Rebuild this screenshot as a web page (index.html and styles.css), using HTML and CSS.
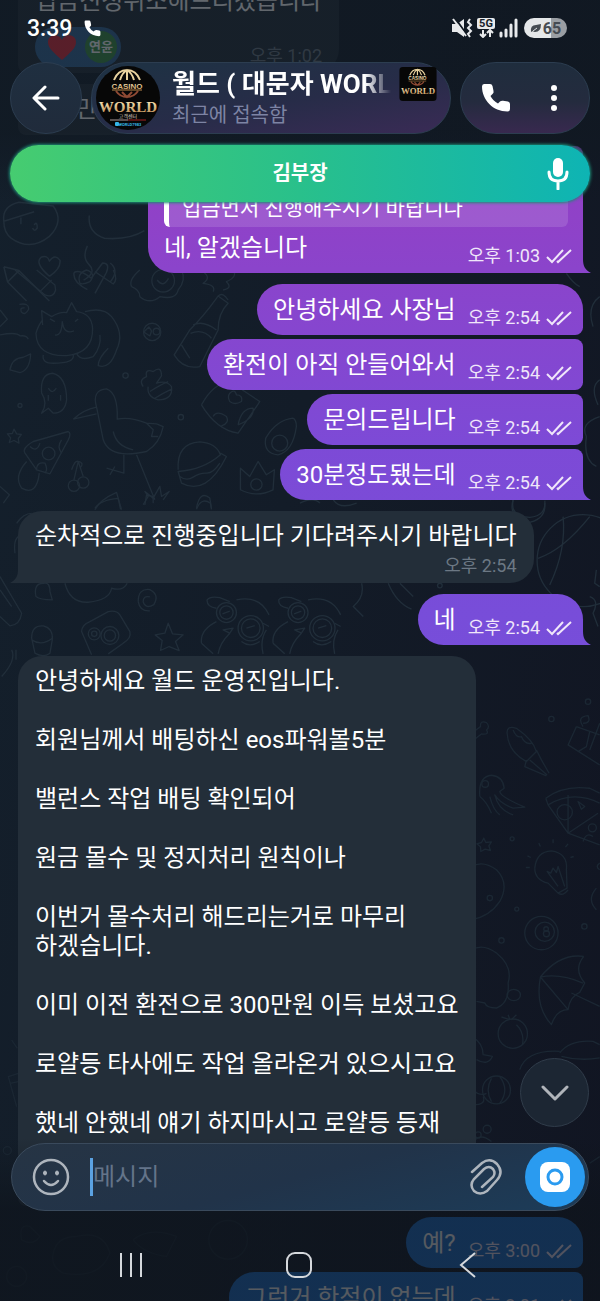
FILE: index.html
```html
<!doctype html>
<html lang="ko">
<head>
  <meta charset="UTF-8">
  <title>월드 - 채팅</title>
  <meta name="viewport" content="width=device-width, initial-scale=1.0">
  <link rel="stylesheet" href="styles.css">
</head>
<body>
  <!-- shared icons -->
  <svg class="sprite" aria-hidden="true">
    <symbol id="ticks" viewBox="0 0 27 16">
      <path d="M1 9 L6 14 L17 2 M11 13 L12 14 L25 2" />
    </symbol>
    <symbol id="phone" viewBox="0 0 30 30">
      <path d="M3 1 H9 Q11 1 11.5 3 L12.5 8 Q13 10 11.5 11 L9.5 13 Q12 18 17 20.5 L19 18.5 Q20 17.5 22 17.7 L27 18.5 Q29 19 29 21 V26 Q29 28.5 26.5 28.5 C12 28.5 1 17 1 3.5 Q1 1 3 1 Z" />
    </symbol>
    <symbol id="logo" viewBox="0 0 64 64">
      <defs>
        <linearGradient id="gold" x1="0" y1="0" x2="0" y2="1">
          <stop offset="0" stop-color="#fff3c4" />
          <stop offset="1" stop-color="#b9854a" />
        </linearGradient>
      </defs>
      <rect width="64" height="64" fill="#070707" />
      <g fill="none" stroke="#e9d3a0" stroke-width="2">
        <path d="M18 14 Q22 4 31 4 Q40 4 44 14 M24 14 Q26 7 31 4 Q36 7 38 14 M31 4 V14" />
        <path d="M20 25 Q24 31 31 31 Q38 31 42 25 M26 26 L31 31 L36 26" stroke="#8f4a34" />
      </g>
      <text x="31" y="23" text-anchor="middle" class="logo-casino">CASINO</text>
      <path d="M16 24 H46" stroke="#b9854a" stroke-width="1" />
      <text x="32" y="46" text-anchor="middle" class="logo-world">WORLD</text>
    </symbol>
  </svg>

  <!-- wallpaper doodles -->
  <svg class="wallpaper" viewBox="0 0 600 1301" preserveAspectRatio="xMinYMin slice" aria-hidden="true">
    <g transform="translate(0 130) scale(.38)">
      <path d="M10 240 Q5 200 50 190 L140 200 Q170 240 130 280 Q80 320 30 285 Q10 270 10 240 L90 215 M55 230 v18 M90 250 q8 -12 8 8 q-8 12 -12 0" />
      <path d="M235 225 Q230 270 275 285 Q340 290 380 265 M130 385 Q90 350 108 335 Q125 328 130 345 Q145 325 158 343 Q160 365 130 385" />
      <path d="M10 360 L50 370 L130 450 M10 360 L20 400 L70 450 M20 400 L50 370" />
      <path d="M230 305 q-15 30 5 50 t-15 40 M195 375 Q210 365 240 390 L270 350 Q290 350 280 375 L250 430 M195 375 Q190 400 230 420 M290 350 q25 20 0 50" />
    </g>
    <g transform="translate(0 270) scale(.333)">
      <path d="M45 0 L135 75 Q160 85 167 60 L165 45 L110 0 M120 65 L155 30" />
      <path d="M240 40 Q230 10 260 0 Q290 10 270 35 Q250 45 240 40 M285 5 L340 42 Q355 30 340 0" />
      <path d="M395 50 Q385 30 420 0 M395 50 Q420 60 420 80 Q450 105 480 80 Q530 90 535 60 Q560 30 545 0" /><circle cx="490" cy="32" r="34" /><path d="M472 30 q18 25 34 -5" />
      <path d="M600 0 Q640 20 610 40 Q650 45 640 65 M700 0 Q715 20 680 35 Q700 55 670 60" />
      <path d="M128 165 L125 122 L155 140 Q180 125 200 128 L215 98 L230 125 Q275 130 278 175 Q280 250 200 257 Q110 260 108 190 Q115 165 128 150 M165 195 q20 5 22 -40 q5 40 35 28 M165 155 l-15 -8 M225 155 l10 -8" />
      <path d="M255 125 Q310 110 335 140 Q375 190 350 240 Q330 300 295 287 Q295 265 325 235 M130 255 Q125 280 160 280 Q225 280 220 255 M300 195 Q305 230 280 260 Q240 275 230 250" />
      <path d="M0 120 L22 148 L0 170 M0 195 Q50 185 60 198 Q80 195 85 208 M58 103 q30 -5 28 15 q-10 20 -22 8 q-5 -15 10 -12" />
      <path d="M30 300 Q35 265 70 262 L92 252 Q90 300 60 308 Z" />
      <path d="M125 430 Q145 400 125 370 Q120 312 158 310 Q200 320 200 390 Q195 430 160 430 L145 415 Z M145 355 q12 20 24 0 M145 375 v18 M182 375 v18" />
      <circle cx="457" cy="186" r="26" /><circle cx="470" cy="185" r="10" /><path d="M432 186 l15 -15 8 12 -5 15 z" />
      <path d="M655 78 L685 100 Q655 130 655 180 L600 290 Q550 300 523 255 L570 180 Q610 140 650 85 Z M655 78 Q670 65 685 90 M580 165 Q610 150 650 180 M572 190 Q610 175 635 205 M545 225 Q560 250 570 265" />
      <path d="M430 350 Q415 330 440 320 Q435 295 460 305 Q485 285 485 318 L470 340 Q500 330 515 350 Q520 390 475 390 Q440 380 445 350 M450 365 Q480 345 505 335 M465 385 Q490 370 515 358" />
      <path d="M220 448 Q250 420 290 412 Q275 360 320 357 Q355 370 352 448 Q390 440 440 460 L470 462 L490 470 Q480 520 440 545 Q330 570 310 510 L290 412 M220 448 L290 432 M340 485 Q350 530 400 540 M440 460 L460 480 455 500 475 500 M372 555 L372 610 L320 595 M345 590 L330 615 M410 555 L465 690 M430 705 L445 680 435 665 460 685 480 650 485 680 508 665 490 690" />
      <path d="M75 550 Q65 535 100 515 L205 485 Q215 490 205 510 L150 612 L110 600 Z M80 575 Q40 620 65 655 Q110 680 118 610" /><circle cx="146" cy="551" r="19" /><path d="M185 510 q-15 20 0 40 M110 600 q0 -25 25 -20 q10 20 0 30 M90 530 q20 20 30 -10" />
      <path d="M42 478 L50 492 L64 494 L55 506 L57 520 L42 512 L28 518 L32 504 L22 492 L37 491 Z" />
      <circle cx="222" cy="648" r="17" /><circle cx="250" cy="638" r="17" /><path d="M222 630 L235 575 M250 620 L235 575 M215 600 q10 -30 20 -25 q20 5 5 20" />
      <path d="M535 600 Q530 520 600 516 Q650 520 662 555 Q610 600 535 605 L545 640 Q620 680 680 560 L662 550 M540 620 Q560 635 580 622 T620 610 T660 580" />
      <path d="M605 405 Q640 340 690 335 L780 395 L770 410 L715 490 Q650 480 605 405 M690 370 q15 -15 20 5 q20 0 15 20 q-20 12 -35 0 q-8 -15 0 -25 M640 440 q10 -20 40 0 q10 20 -15 28 M715 465 q10 -50 45 -50 q5 30 -45 50" />
      <path d="M880 445 Q830 450 798 505 Q790 550 835 555 Q880 545 890 470 Q890 450 880 445" /><circle cx="840" cy="520" r="24" />
      <path d="M722 595 L750 620 L775 575 L800 615 L824 600 L820 660 Q770 685 722 660 Z" /><circle cx="770" cy="644" r="17" />
      <path d="M285 720 Q300 690 350 668 L365 720 M590 715 Q600 660 630 685 L635 715 M0 650 L28 675 L10 700" />
      <circle cx="377" cy="317" r="8" /><circle cx="543" cy="442" r="8" /><circle cx="60" cy="407" r="6" />
    </g>
    <g transform="translate(300 270) scale(.333)">
      <path d="M900 80 Q860 110 880 170 M900 330 Q870 350 895 405 M860 500 Q840 460 900 440 M860 500 Q850 570 890 590" /><path d="M640 690 Q625 740 680 760 Q740 750 735 700 M800 10 q20 30 40 40 M0 700 q40 -20 60 0 M100 690 q20 30 70 10" />
    </g>
    <g transform="translate(0 500) scale(.333)">
      <path d="M285 25 Q300 0 355 -5 L362 28 M590 28 Q605 -10 632 10 L635 28 M435 15 l5 -30 20 5 0 20 M50 70 Q70 40 95 40 M45 160 Q40 120 55 110" />
      <path d="M0 230 L65 340 Q60 375 30 378 L0 350 M0 270 L35 320" />
      <path d="M108 290 Q100 250 130 250 Q150 245 150 275 L157 300 Q120 300 108 290 M195 250 Q210 310 265 307 Q330 300 335 265 Q370 275 382 250" />
      <path d="M415 305 q0 -40 35 -36 q30 15 12 45 q-25 15 -32 -8 q0 -20 20 -15 M415 305 q5 30 35 28" />
      <path d="M275 465 L245 395 Q245 375 270 365 L325 335 Q350 330 360 345 L390 395 Q395 415 370 430 L325 462" /><circle cx="330" cy="407" r="27" /><circle cx="330" cy="407" r="17" /><circle cx="283" cy="402" r="18" /><circle cx="283" cy="402" r="8" />
      <path d="M505 370 L518 402 L550 405 L527 425 L538 452 L508 440 L482 452 L487 422 L466 405 L495 400 Z" />
      <path d="M95 415 Q95 375 130 378 Q160 385 157 420 L150 460 Q130 475 105 460 Z M95 420 Q125 440 157 415 M35 450 q15 30 -30 80 M48 450 v30" />
      <g id="owls">
        <path d="M655 462 Q660 430 690 400 M605 430 Q600 390 650 365 M650 325 Q620 320 622 300 Q630 288 660 293 L690 305 M710 300 Q780 285 808 345 M605 430 L640 462 M670 390 L700 385 L690 400 Z M790 462 Q780 420 800 390" /><circle cx="680" cy="338" r="30" /><circle cx="680" cy="338" r="20" /><circle cx="753" cy="385" r="38" /><circle cx="753" cy="385" r="28" /><path d="M790 370 L808 380 M668 342 l22 -8 M740 385 l25 -8 M725 425 q25 20 55 0" />
      </g>
      <use href="#owls" x="215" />
    </g>
    <g transform="translate(300 500) scale(.333)">
      <circle cx="850" cy="182" r="138" /><path d="M790 50 Q800 150 750 255 M715 175 Q790 150 870 50" />
      <path d="M185 250 Q195 290 160 320 L190 350 M265 250 Q290 310 335 328 M300 250 L340 290 M890 210 L885 250 900 260 M870 290 Q900 300 880 340 L895 380" /><circle cx="420" cy="257" r="7" /><path d="M570 0 q30 -30 60 0 M640 0 q-10 50 50 52 q50 -5 45 -50" />
    </g>
    <g class="faint" transform="translate(300 680) scale(.333)">
      <circle cx="865" cy="65" r="8" /><circle cx="755" cy="117" r="8" /><circle cx="637" cy="477" r="6" /><circle cx="651" cy="688" r="6" /><circle cx="605" cy="782" r="8" /><circle cx="854" cy="740" r="8" /><circle cx="570" cy="655" r="8" />
      <path d="M515 160 L542 140 Q540 120 560 128 Q572 140 560 150 Q570 165 545 162 L515 185" />
      <path d="M622 160 Q620 135 650 145 Q700 180 710 215 L680 245 Q625 215 622 160 M680 240 L675 260 L740 288 M710 210 L725 240 L748 280 M690 240 L742 285 M640 150 q10 25 25 20 q10 25 30 20" />
      <path d="M540 350 Q535 290 575 286 Q610 290 613 325 L600 335 Q600 350 675 382 L640 385 Q600 370 585 345 Q595 390 640 405 M570 350 Q580 390 600 405 M540 350 Q560 365 575 400" /><circle cx="556" cy="312" r="10" />
      <path d="M830 140 L805 195 L900 255 M830 140 L900 165 M850 140 Q830 110 865 107 Q875 130 850 130 M870 155 L860 200 L835 215 M900 130 L870 210" />
      <path d="M738 355 Q790 315 870 325 L900 340 M738 355 L745 375 Q820 330 900 370 M745 375 L805 460 L900 495 M805 345 V460 L895 400 M835 365 l20 15 -10 8 z M850 485 q10 -30 30 -15" /><circle cx="795" cy="397" r="23" /><circle cx="878" cy="444" r="12" />
      <path d="M552 475 L558 488 L575 486 L567 498 L572 512 L556 508 L543 515 L542 501 L531 492 L545 488 Z" />
      <path d="M705 565 Q710 515 755 513 Q805 520 800 570 L802 625 L775 640 L745 610 Q705 600 705 565 M775 620 L742 575 L753 580 L760 565 L770 578 L775 560 L795 620 M775 640 Q790 650 805 630 M693 533 l-10 -5 M690 563 h-12 M722 500 l-5 -10 M760 490 v-12 M797 502 l8 -10 M812 533 l10 -3" />
      <path d="M515 560 Q550 540 590 570 Q630 610 600 665 Q570 710 515 720 M890 690 Q860 660 890 625 M900 550 q-15 10 0 20" /><circle cx="725" cy="760" r="50" /><circle cx="735" cy="756" r="29" /><circle cx="739" cy="748" r="7" /><circle cx="740" cy="762" r="9" />
      <path d="M515 810 Q550 790 590 820 Q640 860 625 910 Q630 970 590 985 Q560 985 555 970 L530 965" /><ellipse cx="642" cy="946" rx="20" ry="17" />
      <path d="M852 830 Q780 820 722 892 Q705 980 755 1035 Q770 990 805 990 Q810 950 840 938 L855 910 Q820 870 852 830 M722 892 Q780 880 850 910 M722 892 L805 990 M815 940 L900 980" />
      <circle cx="639" cy="1062" r="44" /><path d="M630 1020 l-25 -8 M630 1020 l-5 -15 M635 1020 l15 -15 M650 1035 Q675 1060 668 1095 M515 1070 Q550 1090 550 1125 L578 1130 Q565 1160 530 1140 M660 1170 Q680 1110 780 1115 M780 1120 Q810 1080 880 1085 L900 1095 M785 1130 Q840 1145 900 1135" />
    </g>
    <g class="faint" transform="translate(300 1040) scale(.333)">
      <circle cx="590" cy="150" r="42" /><path d="M575 115 Q555 150 575 185 M600 110 Q630 150 600 190 M520 150 Q540 170 560 160 M520 195 Q560 195 550 170 M525 300 q20 -20 50 5 M900 350 L870 370" /><circle cx="562" cy="268" r="12" /><circle cx="535" cy="285" r="9" />
    </g>
    <g class="faint" transform="translate(0 1040) scale(.333)">
      <path d="M55 100 L25 110 L50 200 M30 130 L55 125 M35 0 L52 25" /><circle cx="22" cy="332" r="12" /><path d="M65 600 Q55 550 90 560 L120 590 Q100 620 65 600 M160 640 Q170 590 230 590 Q310 570 330 640 Q300 720 190 700 Q150 680 160 640 M400 600 Q450 560 530 590 L500 650 Q430 640 400 600" /><circle cx="50" cy="710" r="30" /><circle cx="685" cy="600" r="58" />
    </g>
  </svg>

  <main class="chat">
    <article class="msg incoming">
      <p>입금신청취소해드리겠습니다</p>
      <div class="reactions">
        <span class="reaction">
          <svg width="30" height="27" viewBox="0 0 30 27" aria-label="하트"><path d="M15 26 C6 18 1 14 1 8 C1 0 12 -1 15 6 C18 -1 29 0 29 8 C29 14 24 18 15 26 Z" fill="#e32b3a" /></svg>
          <span class="reaction-user">연윤</span>
        </span>
        <time>오후 1:02</time>
      </div>
    </article>

    <article class="msg incoming group">
      <p>100만원</p>
    </article>

    <article class="msg outgoing reply group tail">
      <blockquote>월드<br>입금먼저 진행해주시기 바랍니다</blockquote>
      <div class="line">
        <p>네, 알겠습니다</p>
        <span class="meta"><time>오후 1:03</time><svg class="ticks" role="img" aria-label="읽음"><use href="#ticks" /></svg></span>
      </div>
    </article>

    <article class="msg outgoing line group first">
      <p>안녕하세요 사장님</p>
      <span class="meta"><time>오후 2:54</time><svg class="ticks" role="img" aria-label="읽음"><use href="#ticks" /></svg></span>
    </article>
    <article class="msg outgoing line">
      <p>환전이 아직 안들어와서</p>
      <span class="meta"><time>오후 2:54</time><svg class="ticks" role="img" aria-label="읽음"><use href="#ticks" /></svg></span>
    </article>
    <article class="msg outgoing line">
      <p>문의드립니다</p>
      <span class="meta"><time>오후 2:54</time><svg class="ticks" role="img" aria-label="읽음"><use href="#ticks" /></svg></span>
    </article>
    <article class="msg outgoing line tail">
      <p>30분정도됐는데</p>
      <span class="meta"><time>오후 2:54</time><svg class="ticks" role="img" aria-label="읽음"><use href="#ticks" /></svg></span>
    </article>

    <article class="msg incoming group tail">
      <p>순차적으로 진행중입니다 기다려주시기 바랍니다</p>
      <time>오후 2:54</time>
    </article>

    <article class="msg outgoing line group first tail">
      <p>네</p>
      <span class="meta"><time>오후 2:54</time><svg class="ticks" role="img" aria-label="읽음"><use href="#ticks" /></svg></span>
    </article>

    <article class="msg incoming notice group">
      <p>안녕하세요 월드 운영진입니다.</p>
      <p>회원님께서 배팅하신 eos파워볼5분</p>
      <p>밸런스 작업 배팅 확인되어</p>
      <p>원금 몰수 및 정지처리 원칙이나</p>
      <p>이번거 몰수처리 해드리는거로 마무리<br>하겠습니다.</p>
      <p>이미 이전 환전으로 300만원 이득 보셨고요</p>
      <p>로얄등 타사에도 작업 올라온거 있으시고요</p>
      <p>했네 안했네 얘기 하지마시고 로얄등 등재</p>
    </article>

    <article class="msg outgoing line group first">
      <p>예?</p>
      <span class="meta"><time>오후 3:00</time><svg class="ticks" role="img" aria-label="읽음"><use href="#ticks" /></svg></span>
    </article>
    <article class="msg outgoing line">
      <p>그런거 한적이 없는데</p>
      <span class="meta"><time>오후 3:01</time><svg class="ticks" role="img" aria-label="읽음"><use href="#ticks" /></svg></span>
    </article>
  </main>

  <header class="top">
    <div class="status">
      <span class="clock">3:39</span>
      <svg class="status-call" width="17" height="17"><use href="#phone" /></svg>
      <div class="status-icons">
        <svg width="21" height="20" viewBox="0 0 21 20">
          <path d="M0 6 H5 L12 1 V19 L5 14 H0 Z" fill="#e8eaec" />
          <path d="M3 0 L15 17" stroke="#111922" stroke-width="2" />
          <path d="M1 1 L14 18" stroke="#e8eaec" stroke-width="2" />
          <path d="M18 1 L16 4 L19 7 L16 10 L19 13 L16 16 L18 19" fill="none" stroke="#e8eaec" stroke-width="2" />
        </svg>
        <svg width="18" height="20" viewBox="0 0 18 20">
          <rect width="18" height="11" rx="2" fill="#e8eaec" />
          <text x="9" y="9" text-anchor="middle" class="net">5G</text>
          <path d="M6 12 V18 M3 16 L6 19 L9 16 M13 19 V13 M10 15 L13 12 L16 15" fill="none" stroke="#e8eaec" stroke-width="2" />
        </svg>
        <svg width="19" height="20" viewBox="0 0 19 20">
          <path d="M2 15 V18 M7 12 V18 M12 7 V18 M17 2 V18" stroke="#e8eaec" stroke-width="3" stroke-linecap="round" />
        </svg>
        <span class="battery">
          <svg width="11" height="9" viewBox="0 0 11 9"><path d="M1 8 Q0 1 6 1 L11 0 Q11 8 5 8 Q3 8 3 7 Z" fill="#444b52" /><path d="M3 7 L7 4" stroke="#dfe2e4" /></svg>
          65
        </span>
      </div>
    </div>

    <div class="bar">
      <button class="glass back" type="button" aria-label="뒤로">
        <svg width="28" height="26" viewBox="0 0 28 26"><path d="M26 13 H3 M13 2 L2 13 L13 24" fill="none" stroke="#fff" stroke-width="3" stroke-linecap="round" stroke-linejoin="round" /></svg>
      </button>
      <a class="glass peer" href="#profile">
        <svg class="avatar" viewBox="0 0 64 64" aria-label="월드">
          <use href="#logo" />
          <text x="32" y="52" text-anchor="middle" class="logo-sub">고객센터</text>
          <path d="M14 54 H32" stroke="#a99" stroke-width="1" /><path d="M32 54 H50" stroke="#a32222" stroke-width="1" />
          <rect x="19" y="56" width="4" height="4" rx="1" fill="#35b5e8" />
          <text x="34" y="60" text-anchor="middle" class="logo-id">WORLD7983</text>
        </svg>
        <span class="peer-text">
          <span class="peer-row">
            <strong>월드 ( 대문자 WORLD</strong>
            <svg class="badge" viewBox="0 0 64 58" aria-hidden="true"><use href="#logo" width="64" height="64" /></svg>
          </span>
          <small>최근에 접속함</small>
        </span>
      </a>
      <div class="glass actions">
        <button type="button" aria-label="전화"><svg width="30" height="30"><use href="#phone" /></svg></button>
        <button type="button" aria-label="메뉴"><svg width="8" height="26" viewBox="0 0 8 26"><circle cx="4" cy="3" r="3" /><circle cx="4" cy="13" r="3" /><circle cx="4" cy="23" r="3" /></svg></button>
      </div>
    </div>

    <button class="call" type="button">
      <span>김부장</span>
      <svg width="22" height="32" viewBox="0 0 22 32" aria-hidden="true"><rect x="6" y="0" width="10" height="19" rx="5" fill="#fff" /><path d="M2 14 Q2 23 11 23 Q20 23 20 14 M11 23 V31" fill="none" stroke="#fff" stroke-width="3" stroke-linecap="round" /></svg>
    </button>
  </header>

  <footer class="bottom">
    <button class="glass scroll-down" type="button" aria-label="맨 아래로">
      <svg width="28" height="16" viewBox="0 0 28 16"><path d="M2 2 L14 14 L26 2" fill="none" stroke="#b0b4ba" stroke-width="3" stroke-linecap="round" stroke-linejoin="round" /></svg>
    </button>
    <form class="composer">
      <button type="button" aria-label="이모티콘">
        <svg width="38" height="38" viewBox="0 0 38 38" fill="none" stroke="#aeb5bd"><circle cx="19" cy="19" r="17" stroke-width="2.5" /><path d="M12 23 Q19 31 26 23" stroke-width="2.5" stroke-linecap="round" /><ellipse cx="13" cy="15" rx="1.5" ry="2" fill="#aeb5bd" /><ellipse cx="25" cy="15" rx="1.5" ry="2" fill="#aeb5bd" /></svg>
      </button>
      <input type="text" placeholder="메시지" aria-label="메시지">
      <button type="button" aria-label="파일 첨부">
        <svg width="32" height="38" viewBox="0 0 32 38" fill="none" stroke="#aeb5bd" stroke-width="2.5" stroke-linecap="round"><path d="M2 14 L12 5 Q20 -1 27 6 Q34 14 27 22 L17 33 Q10 38 4 33 Q-1 27 4 21 L14 11 Q19 7 23 11 Q26 15 23 19 L12 29" /></svg>
      </button>
      <button class="camera" type="button" aria-label="카메라">
        <svg width="30" height="30" viewBox="0 0 30 30"><rect width="30" height="30" rx="8" fill="#fff" /><circle cx="15" cy="15" r="7" fill="#fff" stroke="#2a9bf0" stroke-width="3" /></svg>
      </button>
    </form>
    <nav class="nav">
      <button type="button" aria-label="최근 앱"><svg width="24" height="26" viewBox="0 0 24 26"><path d="M2 1 V25 M12 1 V25 M22 1 V25" /></svg></button>
      <button type="button" aria-label="홈"><svg width="26" height="26" viewBox="0 0 26 26"><rect x="1" y="1" width="24" height="24" rx="8" /></svg></button>
      <button type="button" aria-label="이전"><svg width="18" height="26" viewBox="0 0 18 26"><path d="M16 1 L2 13 L16 25" /></svg></button>
    </nav>
  </footer>
</body>
</html>
```

FILE: styles.css
```css
:root {
  --bubble-in: #232e39;
  --tail: path("M0 0 C0 7 2 11 8 14 L0 14 Z");
  --glass-edge: #2c3d50;
}

* {
  box-sizing: border-box;
}

body {
  margin: 0;
  height: 100vh;
  overflow: hidden;
  background: linear-gradient(100deg, #14202c 0%, #131c28 45%, #111522 100%);
  color: #fff;
  font-family: Roboto, "Noto Sans CJK KR", sans-serif;
  font-size: 24px;
  line-height: 29px;
}

button {
  display: flex;
  align-items: center;
  justify-content: center;
  padding: 0;
  border: 0;
  background: none;
  color: inherit;
  font: inherit;
  cursor: pointer;
}

p {
  margin: 0;
}

.sprite {
  position: absolute;
  width: 0;
  height: 0;
}

.wallpaper {
  position: absolute;
  inset: 0;
  width: 100%;
  height: 100%;
  fill: none;
  stroke: #212e3a;
  stroke-width: 4;
  stroke-linejoin: round;
}

.wallpaper .faint {
  stroke: #1b2733;
}

/* messages */
.chat {
  position: relative;
  display: flex;
  flex-direction: column;
  gap: 4px;
  height: 100vh;
  padding: 0 17px 0 18px;
  overflow: hidden;
}

.msg {
  position: relative;
  flex: none;
  max-width: 92%;
  word-break: keep-all;
}

.msg:first-child {
  margin-top: -24px;
}

.group {
  margin-top: 7px;
}

.incoming {
  display: flex;
  flex-direction: column;
  align-self: flex-start;
  padding: 11px 17px 6px;
  border-radius: 24px 24px 24px 8px;
  background: var(--bubble-in);
}

.incoming p + p {
  margin-top: 30px;
}

.incoming p:only-child {
  margin-bottom: 5px;
}

.incoming time {
  align-self: flex-end;
  margin-top: 4px;
  color: #6c7884;
}

.incoming.notice {
  padding-bottom: 68px;
}

time {
  font-size: 18px;
  line-height: 22px;
}

.outgoing {
  align-self: flex-end;
  padding: 12px 10px 10px 16px;
  border-radius: 26px 8px 8px 26px;
  background: linear-gradient(#9440c4 12%, #7d4ad6 34%, #764eda 52%, #1e70cc 93%) fixed;
}

.outgoing.first {
  border-top-right-radius: 26px;
}

.outgoing.tail {
  border-bottom-right-radius: 0;
}

.incoming.tail {
  border-bottom-left-radius: 0;
}

.tail::after {
  content: "";
  position: absolute;
  bottom: 0;
  left: 100%;
  width: 8px;
  height: 14px;
  background: inherit;
  clip-path: var(--tail);
}

.incoming.tail::after {
  right: 100%;
  left: auto;
  transform: scaleX(-1);
}

.line {
  display: flex;
  align-items: flex-end;
  justify-content: space-between;
  gap: 12px;
}

.meta {
  display: flex;
  align-items: center;
  gap: 6px;
  height: 22px;
  margin-bottom: -4px;
  color: #f0e6fa;
}

.ticks {
  width: 27px;
  height: 16px;
  fill: none;
  stroke: #f0e6fa;
  stroke-width: 2;
}

.outgoing.reply {
  width: 77%;
  padding-top: 8px;
}

.reply blockquote {
  margin: 0 5px 7px 0;
  padding: 14px 15px 5px 13px;
  border-left: 5px solid #fff;
  border-radius: 6px;
  background: rgba(255, 255, 255, 0.13);
  font-size: 21px;
  line-height: 27px;
}

.reactions {
  display: flex;
  align-items: flex-end;
  justify-content: space-between;
  margin-top: 11px;
}

.reaction {
  display: flex;
  align-items: center;
  gap: 8px;
  height: 40px;
  padding: 0 4px 0 12px;
  border-radius: 20px;
  background: #35689a;
}

.reaction-user {
  width: 32px;
  border-radius: 50%;
  background: #3c9146;
  font-size: 13px;
  font-weight: 700;
  line-height: 32px;
  text-align: center;
}

/* header */
.top {
  position: absolute;
  inset: 0 0 auto;
  padding: 0 10px;
  background: linear-gradient(rgba(16, 24, 33, 0.66) 0, rgba(16, 24, 33, 0.66) 65%, rgba(16, 24, 33, 0));
}

.status {
  display: flex;
  align-items: center;
  height: 56px;
  padding: 0 23px 0 17px;
}

.clock {
  font-size: 23px;
  font-weight: 500;
}

.status-call {
  margin-left: 12px;
  fill: #fff;
}

.status-icons {
  display: flex;
  align-items: center;
  gap: 4px;
  margin-left: auto;
}

.net {
  fill: #16202a;
  font: bold 11px Roboto, sans-serif;
}

.battery {
  display: flex;
  align-items: center;
  justify-content: center;
  gap: 2px;
  width: 43px;
  height: 20px;
  margin-left: 2px;
  border-radius: 10px;
  background: linear-gradient(90deg, #e4e7e9 63%, #9a9ea3 63%);
  color: #454b52;
  font-size: 16px;
  font-weight: 700;
}

.bar {
  display: flex;
  gap: 9px;
  height: 72px;
  margin: 6px 0 11px;
}

.glass {
  border: 1px solid var(--glass-edge);
  border-radius: 36px;
  background: linear-gradient(#1f2f40, #202b3b);
}

.back {
  flex: none;
  width: 72px;
}

.peer {
  display: flex;
  flex: 1;
  align-items: center;
  gap: 12px;
  min-width: 0;
  padding: 0 13px 0 4px;
  background: linear-gradient(170deg, #1f3144 10%, #272c48 55%, #3a2b56 100%);
  color: #fff;
  text-decoration: none;
}

.avatar {
  flex: none;
  width: 64px;
  height: 64px;
  border-radius: 50%;
}

.peer-text {
  display: flex;
  flex: 1;
  flex-direction: column;
  min-width: 0;
}

.peer-row {
  display: flex;
  align-items: center;
  gap: 8px;
}

.peer strong {
  flex: 1;
  overflow: hidden;
  font-size: 26px;
  line-height: 34px;
  white-space: nowrap;
  mask-image: linear-gradient(90deg, #000 88%, transparent);
}

.badge {
  flex: none;
  width: 38px;
  height: 34px;
  border-radius: 4px;
}

.peer small {
  color: #7d84a4;
  font-size: 20px;
  line-height: 28px;
}

.logo-casino {
  fill: url(#gold);
  font: bold 8px "Liberation Sans", sans-serif;
}

.logo-world {
  fill: url(#gold);
  font: bold 15px "Liberation Serif", serif;
}

.logo-sub {
  fill: #d8cfc0;
  font-size: 5px;
  line-height: 6px;
}

.logo-id {
  fill: #35b5e8;
  font: bold 4px Roboto, sans-serif;
}

.actions {
  display: flex;
  width: 130px;
  padding: 0 6px;
  background: linear-gradient(#1f2d3d, #242b3e 55%, #38294f);
  fill: #fff;
}

.actions button {
  flex: 1;
}

.call {
  position: relative;
  width: 100%;
  height: 57px;
  border-radius: 29px;
  background: linear-gradient(90deg, #46cc70, #29c08b 50%, #0eb4b4);
  box-shadow: 0 0 3px 1px #1d8a75;
  font-size: 20px;
  font-weight: 700;
}

.call svg {
  position: absolute;
  right: 21px;
}

/* footer */
.bottom {
  position: absolute;
  inset: auto 0 0;
  display: flex;
  flex-direction: column;
  padding: 0 11px;
  background: linear-gradient(rgba(14, 20, 28, 0) 80px, rgba(14, 20, 28, 0.7) 150px);
}

.scroll-down {
  align-self: flex-end;
  width: 69px;
  height: 69px;
  margin-bottom: 16px;
  border-color: #303c4a;
  background: #1c2633;
}

.composer {
  display: flex;
  align-items: center;
  height: 68px;
  padding: 0 3px 0 20px;
  border: 1px solid #3a4a5c;
  border-radius: 34px;
  background: linear-gradient(165deg, #263444 0%, #213349 50%, #1c3c59 100%);
}

.composer input {
  flex: 1;
  min-width: 0;
  height: 38px;
  margin-left: 20px;
  padding: 0;
  border: 0;
  border-left: 3px solid #5ba2e2;
  outline: 0;
  background: none;
  color: #fff;
  font: inherit;
}

.composer input::placeholder {
  color: #64748a;
  opacity: 1;
}

.camera {
  width: 60px;
  height: 60px;
  margin-left: 23px;
  border-radius: 50%;
  background: #2a9bf0;
}

.nav {
  display: flex;
  height: 90px;
  padding: 0 37px 0 36px;
  fill: none;
  stroke: #d5d8dc;
  stroke-width: 2;
}

.nav button {
  flex: 1;
  padding-top: 18px;
}

@media (max-width: 420px) {
  .bar {
    gap: 5px;
  }

  .nav {
    padding: 0;
  }
}
```
